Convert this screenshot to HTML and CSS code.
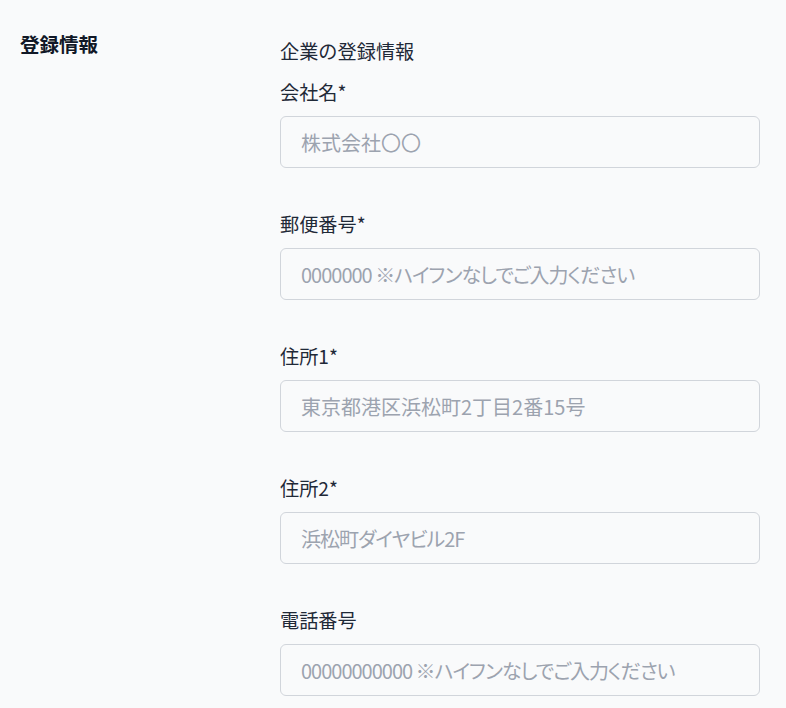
FILE: index.html
```html
<!DOCTYPE html>
<html lang="ja">
<head>
<meta charset="utf-8">
<title>登録情報</title>
<link rel="stylesheet" href="styles.css">
</head>
<body>
<div class="page">
  <div class="side">
    <h2 class="side-title">登録情報</h2>
  </div>
  <form class="form">
    <p class="form-title">企業の登録情報</p>
    <div class="field">
      <label class="label">会社名*</label>
      <input class="input" type="text" placeholder="株式会社〇〇">
    </div>
    <div class="field">
      <label class="label">郵便番号*</label>
      <input class="input input--hint" type="text" placeholder="0000000 ※ハイフンなしでご入力ください">
    </div>
    <div class="field">
      <label class="label">住所1*</label>
      <input class="input" type="text" placeholder="東京都港区浜松町2丁目2番15号">
    </div>
    <div class="field">
      <label class="label">住所2*</label>
      <input class="input input--hint" type="text" placeholder="浜松町ダイヤビル2F">
    </div>
    <div class="field">
      <label class="label">電話番号</label>
      <input class="input input--hint" type="text" placeholder="00000000000 ※ハイフンなしでご入力ください">
    </div>
  </form>
</div>
</body>
</html>
```

FILE: styles.css
```css
html, body {
  margin: 0;
  padding: 0;
  background: #f9fafb;
}
body {
  font-family: "Noto Sans CJK JP", "Noto Sans", sans-serif;
  color: #1f2937;
}
.page {
  display: flex;
  height: 708px;
  overflow: hidden;
}
.side {
  width: 260px;
  padding: 30px 0 0 20px;
  flex: none;
}
.side-title {
  margin: 0;
  font-size: 19.5px;
  line-height: 28px;
  font-weight: 700;
  color: #111827;
}
.form {
  width: 480px;
  padding-top: 37px;
  display: flex;
  flex-direction: column;
  gap: 42px;
}
.form-title {
  margin: 0 0 -29px;
  font-size: 19.2px;
  line-height: 28px;
}
.field {
  display: flex;
  flex-direction: column;
  gap: 10px;
}
.label {
  font-size: 19.2px;
  line-height: 28px;
}
.input {
  box-sizing: border-box;
  width: 480px;
  height: 52px;
  margin: 0;
  padding: 0 20px;
  border: 1px solid #d1d5db;
  border-radius: 6px;
  background: #f9fafb;
  font-family: inherit;
  font-size: 20px;
  color: #1f2937;
  outline: none;
}
.input--hint {
  font-feature-settings: "palt";
  letter-spacing: -1px;
}
.input::placeholder {
  color: #9ca3af;
}
```
